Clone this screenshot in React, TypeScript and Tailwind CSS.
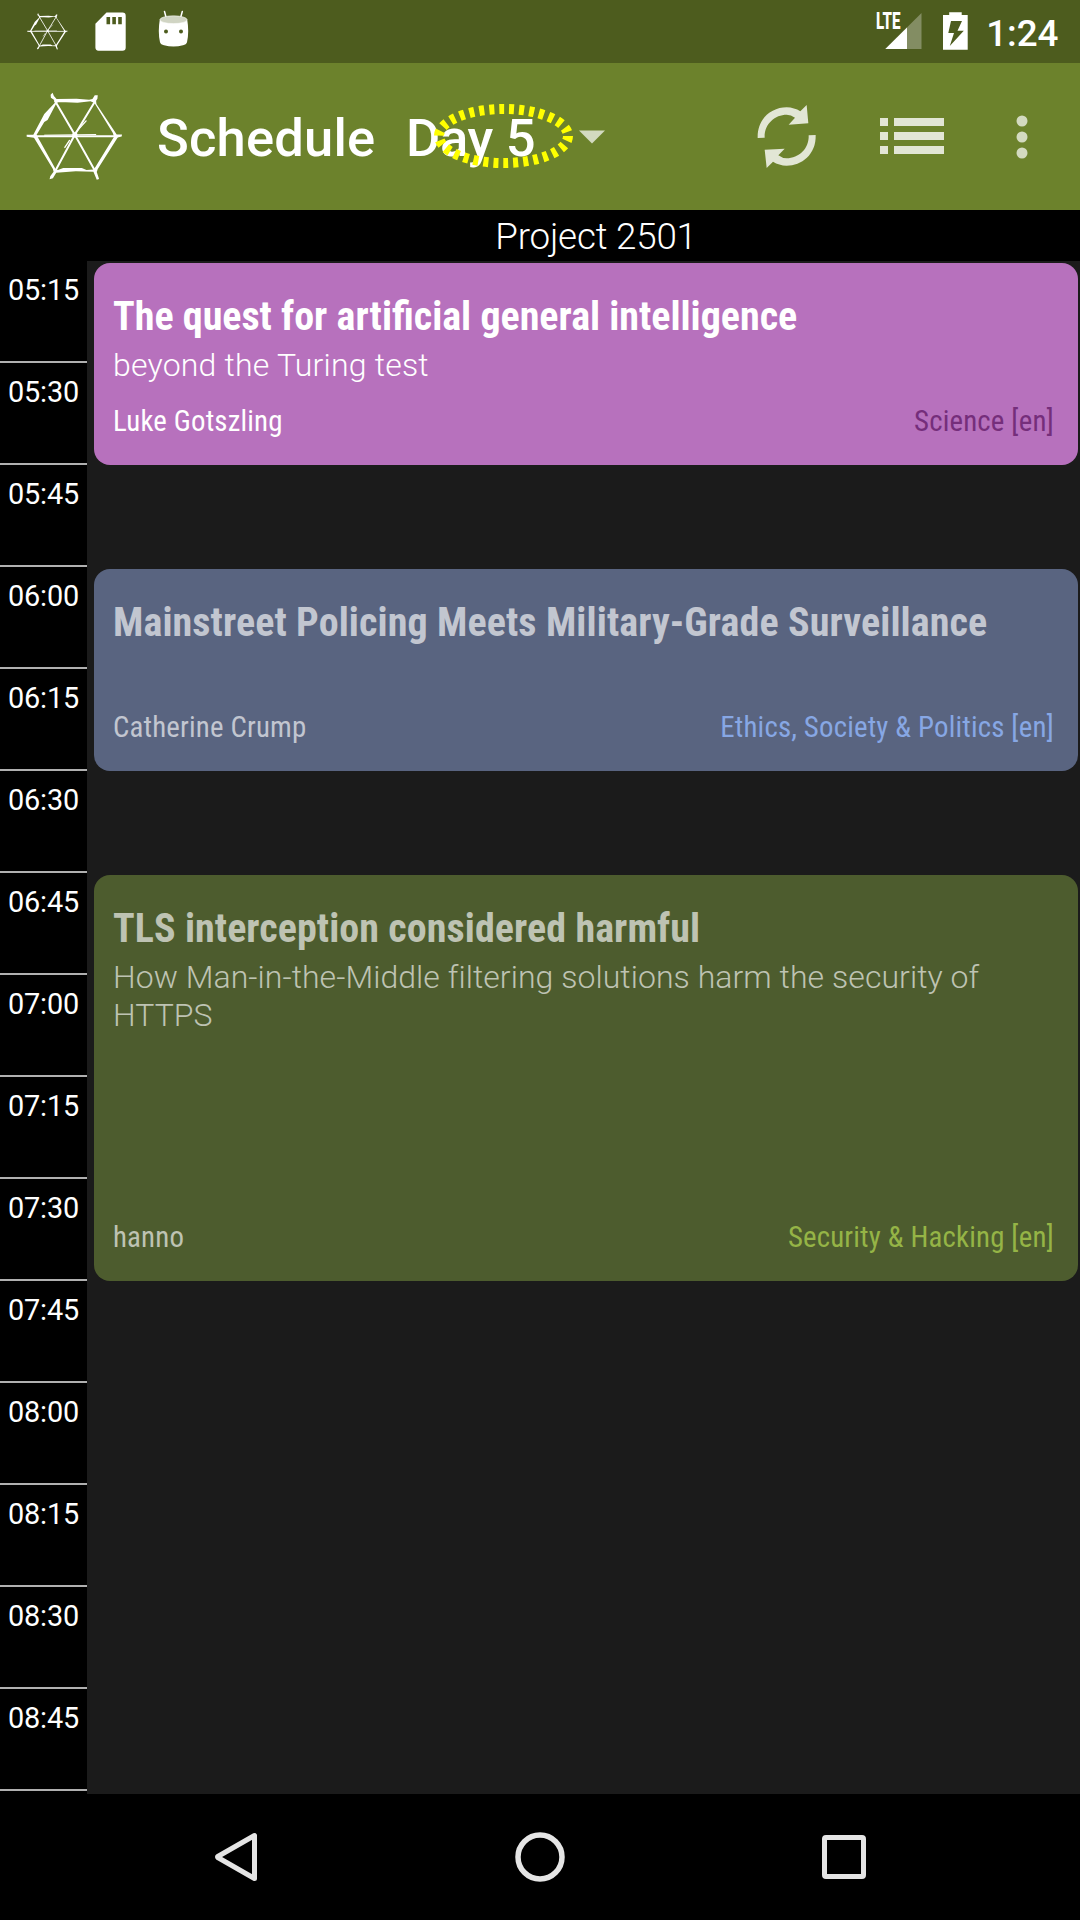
import React from "react";

const times = [
  "05:15", "05:30", "05:45", "06:00", "06:15", "06:30", "06:45", "07:00",
  "07:15", "07:30", "07:45", "08:00", "08:15", "08:30", "08:45",
];

type Session = {
  title: string;
  titleTracking: string;
  subtitle?: string;
  subtitleTracking?: string;
  speaker: string;
  track: string;
  box: string;
  text: string;
  trackColor: string;
};

const sessions: Session[] = [
  {
    title: "The quest for artificial general intelligence",
    titleTracking: "tracking-normal",
    subtitle: "beyond the Turing test",
    subtitleTracking: "tracking-[0.200px]",
    speaker: "Luke Gotszling",
    track: "Science [en]",
    box: "h-[202px] bg-[#b771bd]",
    text: "text-white",
    trackColor: "text-[#752e7b]",
  },
  {
    title: "Mainstreet Policing Meets Military-Grade Surveillance",
    titleTracking: "tracking-[0.100px]",
    speaker: "Catherine Crump",
    track: "Ethics, Society & Politics [en]",
    box: "h-[202px] bg-[#596480]",
    text: "text-[#c2c6d0]",
    trackColor: "text-[#87a7e4]",
  },
  {
    title: "TLS interception considered harmful",
    titleTracking: "tracking-[0.070px]",
    subtitle: "How Man-in-the-Middle filtering solutions harm the security of HTTPS",
    subtitleTracking: "tracking-[0.050px]",
    speaker: "hanno",
    track: "Security & Hacking [en]",
    box: "h-[406px] bg-[#4d5c2e]",
    text: "text-[#bec3b3]",
    trackColor: "text-[#95b446]",
  },
];

function WebLogo({ className }: { className: string }) {
  return (
    <svg className={className} viewBox="76 276 292 268" preserveAspectRatio="none" fill="#fff">
      <path d="M150 284L156 278L160 288L168 297L228 296L266 299L276 297L283 286L292 286L291 296L287 302L288 312L349 404L365 404L364 410L352 413L292 508L289 517L296 538L289 540L279 516L226 515L167 519L157 536L147 539L149 530L159 516L157 508L100 414L78 411L78 405L98 405L131 342L163 308L160 299L151 293ZM172 307L166 313L141 360L131 366L108 405L112 413L165 508L172 511L188 505L244 505L258 511L279 509L285 502L341 411L337 399L282 309L270 304L231 308L196 307Z" fillRule="evenodd" />
      <g stroke="#fff" fill="none" strokeLinecap="round">
        <path d="M164 304L222 403L284 514" strokeWidth="6" />
        <path d="M284 304L222 406L164 514" strokeWidth="6" />
        <path d="M100 409L222 409L352 409" strokeWidth="6" />
        <path d="M132 406L286 404" strokeWidth="3" />
        <path d="M224 400L257 363M193 443L207 422" strokeWidth="4" />
      </g>
      <circle cx="223" cy="405" r="8" />
    </svg>
  );
}

function StatusBar() {
  return (
    <div className="flex h-[63px] items-start bg-[#4d5c1e] pl-[27px] pr-[21.500px]">
      <WebLogo className="mt-[13px] h-[37px] w-[41px]" />
      <svg className="ml-[27px] mt-3 h-[39px] w-[31px]" viewBox="0 0 31 39">
        <path fill="#fff" fillRule="evenodd" d="M11.500 .6H27.500a3.200 3.200 0 0 1 3.200 3.200V35.500a3.200 3.200 0 0 1-3.200 3.200H3.500A3.200 3.200 0 0 1 .4 35.500V11.800ZM11.500 5v7.200h3.600V5ZM17.300 5v7.200h3.600V5ZM23.200 5v7.200h3.600V5Z" />
      </svg>
      <svg className="ml-8 mt-2.5 h-[38px] w-[31px]" viewBox="0 0 31 38">
        <path d="M6.500 1.500L8.500 9M24.300 1.500L22.200 9" stroke="#fff" strokeWidth="1.500" strokeLinecap="round" />
        <path fill="#fff" d="M1.800 9.500Q-.3 22 2 32.300C2.400 34 4 34.700 6 35.200Q15.500 37.800 25 35.200C27 34.700 28.600 34 29 32.300Q31.300 22 29.200 9.500Q15.500 5 1.800 9.500Z" />
        <ellipse cx="15.500" cy="9.700" rx="13.600" ry="3.900" fill="#d0d4c3" stroke="#fff" strokeWidth=".5" />
        <circle cx="8" cy="21.500" r="2" fill="#4d5c1e" />
        <circle cx="23" cy="21.500" r="2" fill="#4d5c1e" />
      </svg>
      <div className="flex-1" />
      <div className="relative mt-3 h-[38px] w-[46px]">
        <svg className="absolute inset-0 h-[38px] w-[46px]" viewBox="0 0 46 38">
          <path d="M45.500 1V37H9.300Z" fill="#838d63" />
          <path d="M31 15.500V37H9.300Z" fill="#fff" />
        </svg>
        <span className="absolute left-0 top-0 origin-top-left scale-x-[0.660] text-[23px] font-extrabold leading-[20px] text-white">LTE</span>
      </div>
      <svg className="ml-[21px] mt-3 h-[38px] w-[25px]" viewBox="0 0 25 38">
        <path fill="#fff" fillRule="evenodd" d="M6.200 .3H18.700V3H24.700V37.700H0V3H6.200ZM8 9L5.300 21H11L6.800 34L20.800 18.700H14.500L19 9Z" />
      </svg>
      <div className="ml-[18px] mt-[12px] text-[36.750px] font-medium leading-[43px] text-white">1:24</div>
    </div>
  );
}

function Toolbar() {
  return (
    <div className="flex h-[147px] items-center bg-[#6c822c] pl-[26px]">
      <WebLogo className="h-[89px] w-[97px]" />
      <div className="ml-[34px] mt-0.5 w-[249px] whitespace-pre text-[52.500px] font-medium leading-[62px] tracking-[0.200px] text-white">Schedule</div>
      <div className="relative mt-0.5 w-[173px] text-[52.500px] font-medium leading-[62px] tracking-[-0.300px] text-white">
        Day 5
        <svg className="absolute left-[27px] top-[-4px] h-[66px] w-[142px]" viewBox="0 0 142 66">
          <ellipse cx="70.500" cy="33" rx="64.500" ry="27" fill="none" stroke="#ff0" strokeWidth="10" strokeDasharray="5 5" />
        </svg>
      </div>
      <svg className="h-[14px] w-[26px]" viewBox="0 0 26 14">
        <path d="M0 .5H26L13 13.500Z" fill="#d3dac0" />
      </svg>
      <div className="flex-1" />
      <svg className="h-[66px] w-[60px]" viewBox="112 310 180 198" fill="#e2e6d5">
        <path d="M114 412C112 353 157 320 201 320Q224 321 242 332L261 313L266 368L207 372L226 351Q214 342 201 342C165 342 133 371 135 411Z" />
        <path d="M288 403C290 462 245 495 201 495Q178 494 160 483L141 502L135 447L195 444L176 464Q188 473 201 473C237 473 269 444 267 404Z" />
      </svg>
      <svg className="mb-px ml-[63px] h-[36px] w-[64px]" viewBox="0 0 64 36" fill="#e2e6d5">
        <path d="M0 0H8V8H0ZM14 0H64V8H14ZM0 14H8V22H0ZM14 14H64V22H14ZM0 28H8V36H0ZM14 28H64V36H14Z" />
      </svg>
      <svg className="ml-[72px] mr-[52px] h-[44px] w-[12px]" viewBox="0 0 12 44" fill="#d3dac0">
        <circle cx="6" cy="6" r="5.500" />
        <circle cx="6" cy="22" r="5.500" />
        <circle cx="6" cy="38" r="5.500" />
      </svg>
    </div>
  );
}

function SessionCard({ s }: { s: Session }) {
  return (
    <div className={`flex flex-col rounded-2xl pb-[27px] pl-[19px] pr-6 pt-[31px] ${s.box} ${s.text}`}>
      <div className={`whitespace-nowrap font-['Roboto_Condensed','Roboto'] text-[40px] font-bold leading-[46px] [font-stretch:75%] ${s.titleTracking}`}>{s.title}</div>
      <div className={`mt-1.5 text-[32px] font-light leading-[38px] ${s.subtitleTracking ?? ""}`}>{s.subtitle}</div>
      <div className="mt-auto flex justify-between font-['Roboto_Condensed','Roboto'] text-[28.875px] leading-[34px] tracking-[0.170px] [font-stretch:75%]">
        <span>{s.speaker}</span>
        <span className={s.trackColor}>{s.track}</span>
      </div>
    </div>
  );
}

function NavBar() {
  return (
    <div className="flex h-[126px] items-center bg-black pl-[214px]">
      <svg className="h-[52px] w-[44px]" viewBox="0 0 44 52">
        <path d="M40.500 4.500V47.500L3.800 26.500Q3.200 26 3.800 25.500Z" fill="none" stroke="#e5e5e5" strokeWidth="5" strokeLinejoin="round" />
      </svg>
      <svg className="ml-[256px] h-[52px] w-[52px]" viewBox="0 0 52 52">
        <circle cx="26" cy="26" r="22" fill="none" stroke="#e5e5e5" strokeWidth="5.500" />
      </svg>
      <div className="ml-[256px] h-[44px] w-[44px] rounded-[4px] border-[5px] border-[#e5e5e5]" />
    </div>
  );
}

export default function App() {
  return (
    <div className="flex h-[1920px] w-[1080px] flex-col overflow-hidden bg-black font-['Roboto',sans-serif]">
      <StatusBar />
      <Toolbar />
      <div className="flex h-[51px] justify-center pl-[112px] pt-[5px] text-[36.750px] font-light leading-[43px] tracking-[-0.200px] text-white">
        Project 2501
      </div>
      <div className="flex h-[1533px]">
        <div className="w-[87px] shrink-0 bg-black">
          {times.map((t) => (
            <div key={t} className="h-[102px] border-b-2 border-[#b0b0b0] pt-[12px] text-center text-[28.875px] leading-[34px] tracking-[-0.150px] text-white">
              {t}
            </div>
          ))}
        </div>
        <div className="flex flex-1 flex-col gap-[104px] bg-[#1b1b1b] pl-[7px] pr-[2px] pt-[2px]">
          {sessions.map((s) => (
            <SessionCard key={s.title} s={s} />
          ))}
        </div>
      </div>
      <NavBar />
    </div>
  );
}
